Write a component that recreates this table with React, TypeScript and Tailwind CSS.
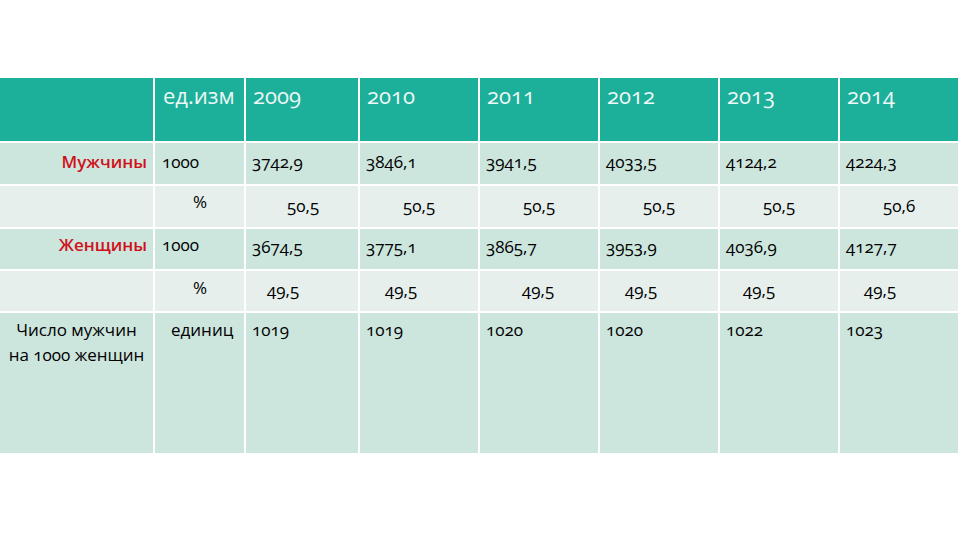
import React from "react";

const years = ["2009", "2010", "2011", "2012", "2013", "2014"];
const men = ["3742,9", "3846,1", "3941,5", "4033,5", "4124,2", "4224,3"];
const menPct = ["50,5", "50,5", "50,5", "50,5", "50,5", "50,6"];
const women = ["3674,5", "3775,1", "3865,7", "3953,9", "4036,9", "4127,7"];
const womenPct = ["49,5", "49,5", "49,5", "49,5", "49,5", "49,5"];
const ratio = ["1019", "1019", "1020", "1020", "1022", "1023"];

// left offsets of the percent values, taken from the slide
const menPctPad = ["pl-[41px]", "pl-[43px]", "pl-[43px]", "pl-[43px]", "pl-[43px]", "pl-[43px]"];
const womenPctPad = ["pl-[21px]", "pl-[25px]", "pl-[42px]", "pl-[25px]", "pl-[23px]", "pl-[24px]"];

const cell = "border-r-2 border-b-2 border-white";

export default function App() {
  return (
    <div className="w-[960px] h-[540px] bg-white pt-[78px] font-['Open_Sans',sans-serif] oldstyle-nums text-[17px] text-black">
      <div className="grid grid-cols-[155px_91px_114px_120px_120px_120px_120px_120px] grid-rows-[65px_43px_43px_42px_42px_142px]">
        {/* header */}
        <div className={`${cell} bg-[#1cb09b]`} />
        <div className={`${cell} bg-[#1cb09b] pl-[8px] pt-[1px] text-[22px] text-[#eef8f6]`}>ед.изм</div>
        {years.map((y) => (
          <div key={y} className={`${cell} bg-[#1cb09b] pl-[7px] pt-[1px] text-[22px] text-[#eef8f6]`}>
            {y}
          </div>
        ))}

        {/* men */}
        <div className={`${cell} bg-[#cce5dd] pr-[6px] pt-[6px] text-right font-semibold text-[#d0101a]`}>Мужчины</div>
        <div className={`${cell} bg-[#cce5dd] pl-[7px] pt-[6px]`}>1000</div>
        {men.map((v, i) => (
          <div key={i} className={`${cell} bg-[#cce5dd] pl-[6px] pt-[6px]`}>
            {v}
          </div>
        ))}

        <div className={`${cell} bg-[#e6efec]`} />
        <div className={`${cell} bg-[#e6efec] pl-[38px] pt-[3px]`}>%</div>
        {menPct.map((v, i) => (
          <div key={i} className={`${cell} bg-[#e6efec] ${menPctPad[i]} pt-[7px]`}>
            {v}
          </div>
        ))}

        {/* women */}
        <div className={`${cell} bg-[#cce5dd] pr-[6px] pt-[3px] text-right font-semibold text-[#d0101a]`}>Женщины</div>
        <div className={`${cell} bg-[#cce5dd] pl-[7px] pt-[3px]`}>1000</div>
        {women.map((v, i) => (
          <div key={i} className={`${cell} bg-[#cce5dd] pl-[6px] pt-[5px]`}>
            {v}
          </div>
        ))}

        <div className={`${cell} bg-[#e6efec]`} />
        <div className={`${cell} bg-[#e6efec] pl-[38px] pt-[4px]`}>%</div>
        {womenPct.map((v, i) => (
          <div key={i} className={`${cell} bg-[#e6efec] ${womenPctPad[i]} pt-[6px]`}>
            {v}
          </div>
        ))}

        {/* ratio */}
        <div className={`${cell} bg-[#cce5dd] pt-[4px] text-center leading-[25px]`}>
          Число мужчин
          <br />
          на 1000 женщин
        </div>
        <div className={`${cell} bg-[#cce5dd] pl-[16px] pt-[4px] leading-[25px]`}>единиц</div>
        {ratio.map((v, i) => (
          <div key={i} className={`${cell} bg-[#cce5dd] pl-[6px] pt-[4px] leading-[25px]`}>
            {v}
          </div>
        ))}
      </div>
    </div>
  );
}
